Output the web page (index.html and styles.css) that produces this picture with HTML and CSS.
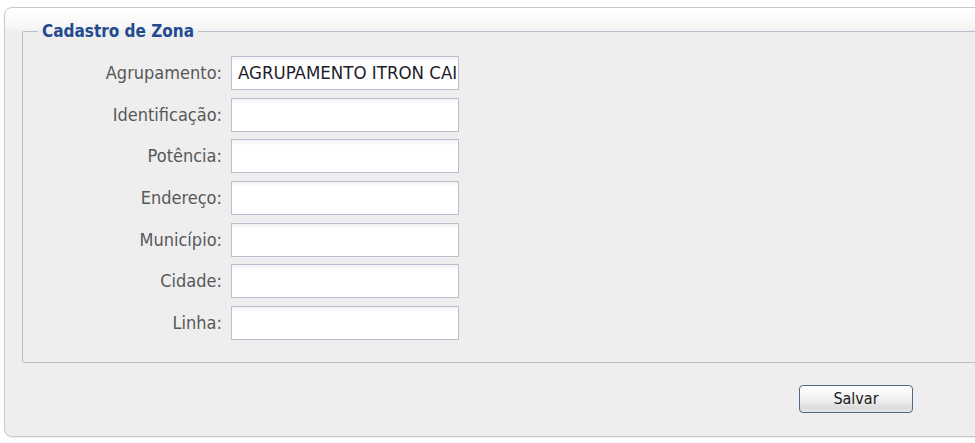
FILE: index.html
```html
<!DOCTYPE html>
<html lang="pt">
<head>
<meta charset="utf-8">
<title>Cadastro de Zona</title>
<link rel="stylesheet" href="styles.css">
</head>
<body>
<div class="panel">
  <fieldset class="group">
    <legend class="group-title">Cadastro de Zona</legend>
    <div class="form-grid">
      <label class="field-label">Agrupamento:</label>
      <div class="field-input"><span class="field-value">AGRUPAMENTO ITRON CAIXA</span></div>
      <label class="field-label">Identificação:</label>
      <div class="field-input"></div>
      <label class="field-label">Potência:</label>
      <div class="field-input"></div>
      <label class="field-label">Endereço:</label>
      <div class="field-input"></div>
      <label class="field-label">Município:</label>
      <div class="field-input"></div>
      <label class="field-label">Cidade:</label>
      <div class="field-input"></div>
      <label class="field-label">Linha:</label>
      <div class="field-input"></div>
    </div>
  </fieldset>
  <div class="footer">
    <button class="btn" type="button">Salvar</button>
  </div>
</div>
</body>
</html>
```

FILE: styles.css
```css
html, body {
  margin: 0;
  padding: 0;
  background: #ffffff;
  overflow: hidden;
}
body {
  width: 975px;
  height: 443px;
  font-family: "DejaVu Sans Condensed", "DejaVu Sans", sans-serif;
}
.panel {
  box-sizing: border-box;
  width: 995px;
  height: 430px;
  margin: 7px 0 0 4px;
  border: 1px solid #c8c8ce;
  border-radius: 8px;
  background: linear-gradient(to bottom, #ffffff 0, #f6f6f6 20px, #eeeeee 24px, #eeeeee 100%);
  box-shadow: 0 1px 1px rgba(0,0,0,0.08);
}
.group {
  box-sizing: border-box;
  width: 1100px;
  margin: 15px 0 0 17px;
  padding: 17px 0 22px 0;
  border: 1px solid #bcbccc;
  border-radius: 2px;
  min-width: 0;
}
.group-title {
  margin-left: 15px;
  padding: 0 4px;
  font-size: 17px;
  line-height: 16px;
  font-weight: bold;
  color: #234a8f;
}
.form-grid {
  display: grid;
  grid-template-columns: 199px 228px;
  column-gap: 9px;
  row-gap: 7.7px;
  align-items: center;
}
.field-label {
  text-align: right;
  font-size: 18px;
  line-height: 20px;
  color: #585858;
  white-space: nowrap;
}
.field-input {
  box-sizing: border-box;
  height: 34px;
  border: 1px solid #bdbdcf;
  background: linear-gradient(to bottom, #f2f2f4 0, #ffffff 5px, #ffffff 100%);
  overflow: hidden;
  white-space: nowrap;
  display: flex;
  align-items: center;
  padding-left: 6px;
}
.field-value {
  font-size: 18.5px;
  line-height: 20px;
  color: #1d1d2a;
}
.footer {
  display: flex;
  justify-content: flex-end;
  padding: 22px 85px 0 0;
}
.btn {
  box-sizing: border-box;
  width: 114px;
  height: 28px;
  border: 1px solid #4f6b88;
  border-radius: 4px;
  background: linear-gradient(to bottom, #ffffff 0, #f1f1f1 50%, #dcdcdc 85%, #e8e8e8 100%);
  font-family: "DejaVu Sans Condensed", "DejaVu Sans", sans-serif;
  font-size: 16px;
  line-height: 18px;
  color: #1a1a1a;
  padding: 0;
}
```
